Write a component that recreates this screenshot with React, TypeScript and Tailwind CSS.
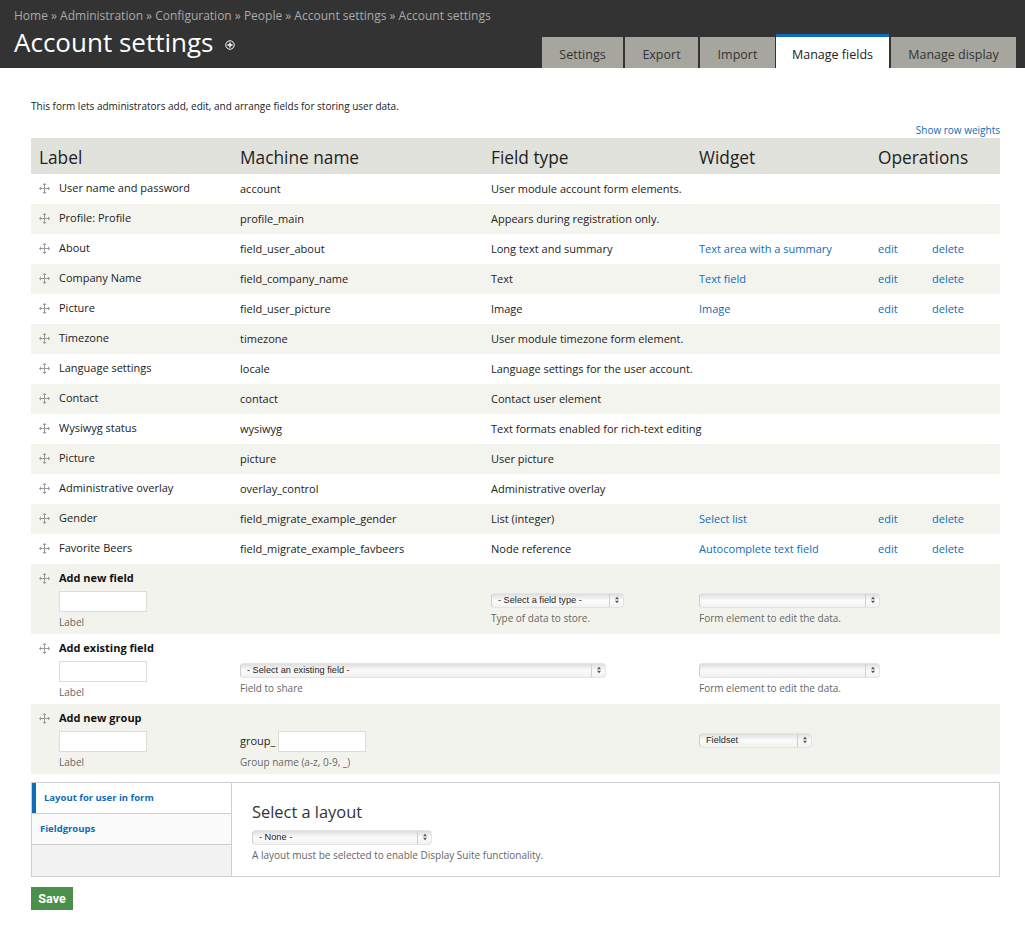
const OS = "font-['Open_Sans',sans-serif]";

function Handle({ up }: { up?: boolean }) {
  return (
    <svg width="11" height="11" viewBox="0 0 11 11" className={`shrink-0 ${up ? "-translate-y-px" : ""}`} fill="#999">
      <rect x="5" y="1.5" width="1" height="8" />
      <rect x="1.5" y="5" width="8" height="1" />
      <path d="M5.5 0 L7.5 2 H3.5 Z M5.5 11 L7.5 9 H3.5 Z M0 5.5 L2 3.5 V7.5 Z M11 5.5 L9 3.5 V7.5 Z" />
    </svg>
  );
}

function Sel({ w, text }: { w: string; text: string }) {
  return (
    <div className={`relative h-[15px] ${w}`}>
      <select
        defaultValue={text}
        className="block h-full w-full appearance-none rounded-[4px] border border-[#e4e4e4] border-l-[#cfcfcf] bg-gradient-to-b from-[#dedede] via-[#fbfbfb] to-[#f2f2f2] pl-[6px] font-['Liberation_Sans',sans-serif] text-[9.2px] leading-[13px] text-[#222]"
      >
        <option value={text}>{text}</option>
      </select>
      <span className="pointer-events-none absolute inset-y-[1px] right-[14px] w-px bg-[#d0d0d0]" />
      <svg width="4" height="8" viewBox="0 0 5 8" className="pointer-events-none absolute right-[5px] top-[3px]" fill="#555">
        <path d="M2.5 0 L5 3 H0 Z M2.5 8 L5 5 H0 Z" />
      </svg>
    </div>
  );
}

function TextBox({ w = "w-[88px]" }: { w?: string }) {
  return <input className={`block h-[21px] ${w} border border-[#dcdcd8] bg-white`} />;
}

const Desc = ({ children }: { children: React.ReactNode }) => (
  <div className="whitespace-nowrap text-[10px] leading-[14px] text-[#666]">{children}</div>
);

const A = ({ children }: { children: React.ReactNode }) => (
  <a href="#" className="text-[#0f6cb5]">{children}</a>
);

const rows: [string, string, string, string?, boolean?][] = [
  ["User name and password", "account", "User module account form elements."],
  ["Profile: Profile", "profile_main", "Appears during registration only."],
  ["About", "field_user_about", "Long text and summary", "Text area with a summary", true],
  ["Company Name", "field_company_name", "Text", "Text field", true],
  ["Picture", "field_user_picture", "Image", "Image", true],
  ["Timezone", "timezone", "User module timezone form element."],
  ["Language settings", "locale", "Language settings for the user account."],
  ["Contact", "contact", "Contact user element"],
  ["Wysiwyg status", "wysiwyg", "Text formats enabled for rich-text editing"],
  ["Picture", "picture", "User picture"],
  ["Administrative overlay", "overlay_control", "Administrative overlay"],
  ["Gender", "field_migrate_example_gender", "List (integer)", "Select list", true],
  ["Favorite Beers", "field_migrate_example_favbeers", "Node reference", "Autocomplete text field", true],
];

const COLS = "grid grid-cols-[209px_251px_208px_179px_54px_68px]";

function Tab({ label, w, active }: { label: string; w: string; active?: boolean }) {
  return active ? (
    <a href="#" className={`flex h-[34px] ${w} items-center justify-center border-t-[3px] border-[#0f6cb5] bg-white pt-[5px] text-[12.5px] text-[#222]`}>
      {label}
    </a>
  ) : (
    <a href="#" className={`flex h-[31px] ${w} items-center justify-center bg-[#a6a69f] pt-[6px] text-[12.5px] text-[#333]`}>
      {label}
    </a>
  );
}

function AddRow({ tint, children }: { tint?: boolean; children: React.ReactNode }) {
  return (
    <div className={`${COLS} h-[70px] ${tint ? "bg-[#f3f3ee]" : "bg-white"}`}>{children}</div>
  );
}

function AddLabel({ title }: { title: string }) {
  return (
    <div className="pl-[8px] pt-[7px]">
      <div className="flex h-[14px] items-center">
        <Handle />
        <span className="ml-[9px] text-[11px] font-bold text-[#111]">{title}</span>
      </div>
      <div className="ml-[20px] mt-[6px]">
        <TextBox />
        <div className="mt-[3px]"><Desc>Label</Desc></div>
      </div>
    </div>
  );
}

export default function App() {
  return (
    <div className={`${OS} h-[926px] w-[1025px] overflow-hidden bg-white text-[#222]`}>
      <header className="flex h-[68px] justify-between bg-[#333] pl-[14px] pr-[9px]">
        <div>
          <nav className="pt-[8px] text-[12px] leading-[16px] text-[#aaa]">
            Home » Administration » Configuration » People » Account settings » Account settings
          </nav>
          <h1 className="-mt-px flex items-center text-[26px] font-normal leading-[38px] text-white">
            Account settings
            <svg width="10" height="10" viewBox="0 0 10 10" className="ml-[12px] mt-[5px]">
              <circle cx="5" cy="5" r="4.2" fill="none" stroke="#fff" />
              <path d="M5 2.5v5M2.5 5h5" stroke="#fff" strokeWidth="1.4" />
            </svg>
          </h1>
        </div>
        <div className="flex items-end gap-[2px]">
          <Tab label="Settings" w="w-[81px]" />
          <Tab label="Export" w="w-[73px]" />
          <Tab label="Import" w="w-[75px]" />
          <div className="-ml-[1px]"><Tab label="Manage fields" w="w-[113px]" active /></div>
          <Tab label="Manage display" w="w-[125px]" />
        </div>
      </header>

      <main className="pl-[31px]">
        <p className="pt-[31px] text-[10px] leading-[15px] text-[#222]">
          This form lets administrators add, edit, and arrange fields for storing user data.
        </p>
        <div className="mt-[9px] w-[969px] text-right text-[10px] leading-[15px]"><A>Show row weights</A></div>

        <div className="w-[969px]">
          <div className={`${COLS} h-[36px] items-center bg-[#e1e2dc] pt-[3px] text-[17.3px] text-[#222]`}>
            <div className="pl-[8px]">Label</div>
            <div>Machine name</div>
            <div>Field type</div>
            <div>Widget</div>
            <div className="col-span-2">Operations</div>
          </div>

          {rows.map(([label, machine, type, widget, ops], i) => (
            <div key={i} className={`${COLS} h-[30px] items-center text-[11px] ${i % 2 ? "bg-[#f3f4ee]" : "bg-white"}`}>
              <div className="flex items-center pl-[8px]">
                <Handle up />
                <span className="ml-[9px] -translate-y-px">{label}</span>
              </div>
              <div>{machine}</div>
              <div className="whitespace-nowrap">{type}</div>
              <div>{widget && <A>{widget}</A>}</div>
              <div>{ops && <A>edit</A>}</div>
              <div>{ops && <A>delete</A>}</div>
            </div>
          ))}

          <AddRow tint>
            <AddLabel title="Add new field" />
            <div />
            <div className="pt-[29px]">
              <Sel w="w-[133px]" text="- Select a field type -" />
              <div className="mt-[3px]"><Desc>Type of data to store.</Desc></div>
            </div>
            <div className="col-span-3 pt-[29px]">
              <Sel w="w-[181px]" text="" />
              <div className="mt-[3px]"><Desc>Form element to edit the data.</Desc></div>
            </div>
          </AddRow>

          <AddRow>
            <AddLabel title="Add existing field" />
            <div className="col-span-2 pt-[29px]">
              <Sel w="w-[366px]" text="- Select an existing field -" />
              <div className="mt-[3px]"><Desc>Field to share</Desc></div>
            </div>
            <div className="col-span-3 pt-[29px]">
              <Sel w="w-[181px]" text="" />
              <div className="mt-[3px]"><Desc>Form element to edit the data.</Desc></div>
            </div>
          </AddRow>

          <AddRow tint>
            <AddLabel title="Add new group" />
            <div className="pt-[27px]">
              <div className="flex items-center gap-[3px] text-[11px]">
                group_
                <TextBox />
              </div>
              <div className="mt-[3px]"><Desc>Group name (a-z, 0-9, _)</Desc></div>
            </div>
            <div />
            <div className="col-span-3 pt-[29px]">
              <Sel w="w-[113px]" text="Fieldset" />
            </div>
          </AddRow>
        </div>

        <section className="mt-[8px] flex h-[95px] w-[969px] border border-[#cfcfcf]">
          <div className="flex w-[200px] shrink-0 flex-col border-r border-[#cfcfcf] bg-[#f2f2f2] text-[9.5px] font-bold">
            <div className="flex h-[30px] items-center border-l-[4px] border-[#0f6cb5] bg-white pl-[8px]"><A>Layout for user in form</A></div>
            <div className="flex h-[32px] items-center border-y border-[#cfcfcf] bg-[#fafafa] pl-[8px]"><A>Fieldgroups</A></div>
          </div>
          <div className="pl-[20px] pt-[17px]">
            <h2 className="text-[16.4px] font-normal leading-[24px] text-[#333]">Select a layout</h2>
            <div className="mt-[6px]"><Sel w="w-[180px]" text="- None -" /></div>
            <div className="mt-[3px]"><Desc>A layout must be selected to enable Display Suite functionality.</Desc></div>
          </div>
        </section>

        <button className="mt-[10px] h-[23px] w-[42px] bg-[#4a8f4a] pt-[1px] font-['Roboto',sans-serif] text-[12.5px] font-bold text-white">Save</button>
      </main>
    </div>
  );
}
